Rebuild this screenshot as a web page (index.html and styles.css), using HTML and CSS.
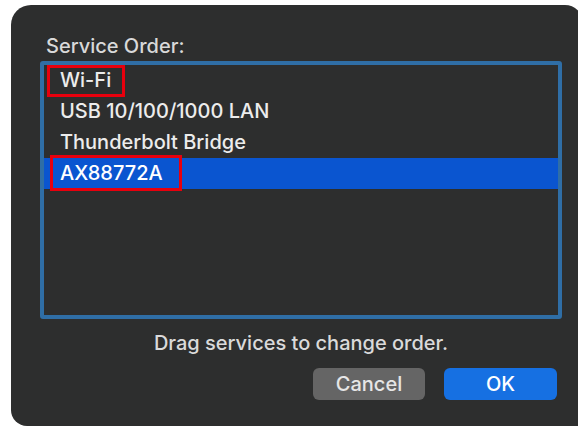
FILE: index.html
```html
<!DOCTYPE html>
<html>
<head>
<meta charset="utf-8">
<link rel="stylesheet" href="styles.css">
</head>
<body>
<div class="dialog">
  <div class="label">Service Order:</div>
  <div class="list">
    <div class="row"><span class="mark mark-wifi">Wi-Fi</span></div>
    <div class="row">USB 10/100/1000 LAN</div>
    <div class="row">Thunderbolt Bridge</div>
    <div class="row selected"><span class="mark mark-ax">AX88772A</span></div>
  </div>
  <div class="hint">Drag services to change order.</div>
  <div class="buttons">
    <button class="btn cancel">Cancel</button>
    <button class="btn ok">OK</button>
  </div>
</div>
</body>
</html>
```

FILE: styles.css
```css
html, body {
  margin: 0;
  padding: 0;
  background: #ffffff;
}

body {
  width: 578px;
  height: 428px;
  overflow: hidden;
  font-family: Inter, "Noto Sans", sans-serif;
}

.dialog {
  margin: 5px 0 0 11px;
  width: 572px;
  height: 421px;
  box-sizing: border-box;
  background: #2d2e2e;
  border-radius: 20px 18px 0 16px;
  padding: 29px 0 0 29px;
  display: flex;
  flex-direction: column;
}

.label {
  color: #d9d9d9;
  font-size: 20px;
  font-weight: 500;
  line-height: 24px;
  padding-left: 6px;
}

.list {
  margin-top: 3px;
  width: 522px;
  height: 258px;
  box-sizing: border-box;
  border: 4px solid #2f6ea6;
  border-radius: 3px;
  display: flex;
  flex-direction: column;
}

.row {
  height: 31px;
  line-height: 31px;
  padding-left: 16px;
  color: #ececec;
  font-size: 20px;
  font-weight: 500;
}

.row.selected {
  background: #0a55d0;
  color: #ffffff;
}

.mark {
  position: relative;
}

.mark::after {
  content: "";
  position: absolute;
  border: 3px solid #e8000d;
}

.mark-wifi::after {
  left: -13px;
  right: -14px;
  top: -3px;
  bottom: -5px;
}

.mark-ax::after {
  left: -10px;
  right: -19px;
  top: -6px;
  bottom: -6px;
}

.hint {
  margin-top: 12px;
  width: 522px;
  text-align: center;
  color: #dadada;
  font-size: 20px;
  font-weight: 500;
  line-height: 24px;
}

.buttons {
  margin-top: 13px;
  width: 517px;
  display: flex;
  justify-content: flex-end;
  gap: 19px;
}

.btn {
  width: 112px;
  height: 32px;
  border: none;
  border-radius: 6px;
  font-family: inherit;
  font-size: 20px;
  font-weight: 500;
  color: #e6e6e6;
  padding: 0;
}

.cancel {
  background: #656565;
}

.ok {
  width: 113px;
  background: #1670e2;
  color: #ffffff;
}
```
